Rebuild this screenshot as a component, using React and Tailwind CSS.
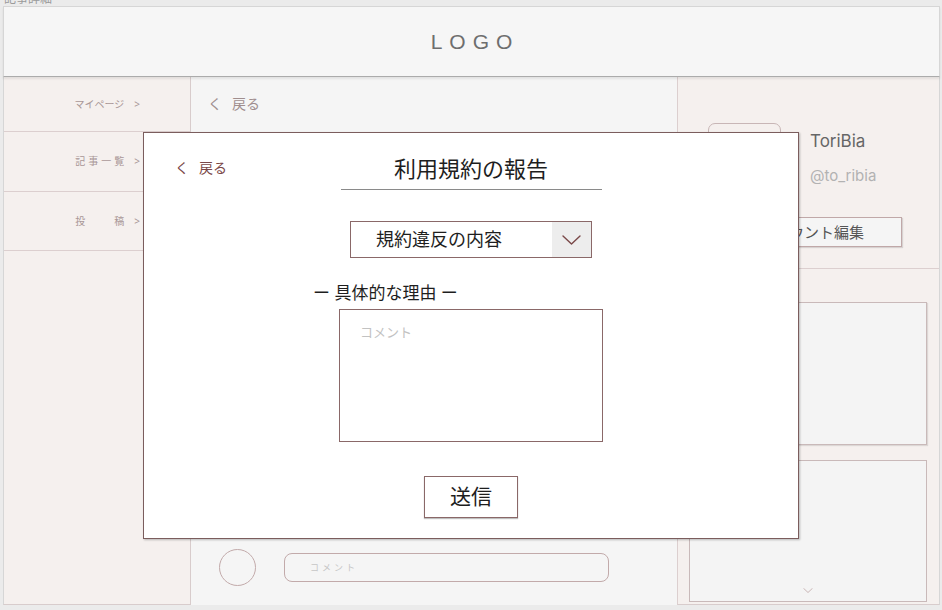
import { useState } from 'react'

const jp = "font-['Noto_Sans','Noto_Sans_CJK_JP',sans-serif]"

function Chevron({ className, w = 19, h = 10 }) {
  return (
    <svg width={w} height={h} viewBox="0 0 19 10" fill="none" className={className}>
      <path d="M1 1 L9.5 9 L18 1" stroke="currentColor" strokeWidth="1.4" strokeLinecap="round" strokeLinejoin="round" />
    </svg>
  )
}

function SideItem({ children, tracked, className }) {
  return (
    <div className={`flex items-center justify-end pr-[50px] border-b border-[#dccfcf] ${className}`}>
      <span className={`text-[10px] text-[#a89696] ${tracked ? 'tracking-[3px]' : ''}`}>{children}</span>
      <span className={`text-[10px] text-[#a89696] ${tracked ? 'ml-[7px]' : 'ml-[10px]'}`}>&gt;</span>
    </div>
  )
}

function ReportModal() {
  const [reason, setReason] = useState('')

  return (
    <div className={`absolute left-[143px] top-[132px] w-[656px] h-[407px] bg-white border border-[#7b5d5d] shadow-[1px_1px_2px_rgba(0,0,0,0.25)] flex flex-col items-center ${jp}`}>
      <div className="absolute left-[31px] top-[25px] flex items-center gap-[10px] text-[14px] leading-[20px] text-[#7a4848]">
        <span>く</span>
        <span>戻る</span>
      </div>

      <div className="mt-[20px] w-[261px] border-b border-[#8a8a8a] pb-[6px] text-center text-[22px] leading-[30px] text-[#1e1e1e]">
        利用規約の報告
      </div>

      <div className="mt-[31px] w-[242px] h-[37px] border border-[#8a6868] flex">
        <div className="flex-1 flex items-center pl-[25px] text-[18px] text-[#1e1e1e]">規約違反の内容</div>
        <div className="w-[39px] bg-[#ededed] flex items-center justify-center text-[#7a4848]">
          <Chevron />
        </div>
      </div>

      <div className="w-[264px] flex flex-col">
        <div className="mt-[23px] -ml-[26px] text-[17px] leading-[23px] text-[#1e1e1e]">ー 具体的な理由 ー</div>
        <textarea
          value={reason}
          onChange={(e) => setReason(e.target.value)}
          placeholder="コメント"
          className="mt-[5px] w-[264px] h-[133px] resize-none border border-[#8a6868] px-[20px] py-[12px] text-[13px] leading-[20px] text-[#333] placeholder:text-[#c2c2c2] focus:outline-none"
        />
      </div>

      <button className="mt-[34px] w-[94px] h-[42px] border border-[#8a6868] bg-white shadow-[0_1px_1px_rgba(0,0,0,0.25)] text-[21px] text-[#1e1e1e]">
        送信
      </button>
    </div>
  )
}

export default function App() {
  return (
    <div className={`relative w-[942px] h-[610px] bg-[#ebebeb] overflow-hidden ${jp}`}>
      <div className="absolute left-[4px] -top-[10px] text-[12px] text-[#9a9a9a]">記事詳細</div>

      <div className="ml-[3px] mt-[6px] w-[937px] flex flex-col">
        <header className="relative z-10 h-[71px] bg-[#f6f6f6] border border-[#d6d6d6] border-b-[#ababab] shadow-[0_2px_2px_rgba(0,0,0,0.08)] flex items-center justify-center">
          <span className="pl-[7px] text-[21px] tracking-[7px] text-[#6e6e6e] font-['Liberation_Sans',sans-serif]">LOGO</span>
        </header>

        <div className="h-[528px] flex">
          <aside className="w-[188px] bg-[#f5f0ee] border-l border-[#d6d6d6] border-r border-r-[#d8cccc] border-b border-b-[#d8cccc] flex flex-col">
            <SideItem className="h-[55px]">マイページ</SideItem>
            <SideItem className="h-[60px]" tracked>記事一覧</SideItem>
            <SideItem className="h-[59px]" tracked>投{'\u3000\u3000'}稿</SideItem>
          </aside>

          <main className="w-[486px] bg-[#f5f5f5] flex flex-col justify-between">
            <div className="pl-[17px] pt-[17px] flex items-center gap-[10px] text-[14px] leading-[20px] text-[#a08e8e]">
              <span>く</span>
              <span>戻る</span>
            </div>
            <div className="pl-[28px] pb-[19px] flex items-center gap-[28px]">
              <div className="w-[37px] h-[37px] rounded-full border border-[#c2aaaa]" />
              <div className="w-[325px] h-[29px] rounded-[8px] border border-[#c2aaaa] flex items-center pl-[25px] text-[9px] tracking-[3px] text-[#c6c6c6]">
                コメント
              </div>
            </div>
          </main>

          <section className="flex-1 bg-[#f5f0ee] border-l border-[#dccfcf] border-r border-r-[#d6d6d6] border-b border-b-[#d8cccc] flex flex-col">
            <div className="h-[192px] ml-[12px] border-b border-[#dccfcf] flex flex-col">
              <div className="pt-[46px] pl-[18px] flex items-start gap-[29px]">
                <div className="w-[73px] h-[73px] rounded-[7px] border border-[#c8b6b6]" />
                <div className="pt-[6px] flex flex-col">
                  <span className="text-[17px] leading-[24px] text-[#666] font-['Inter',sans-serif]">ToriBia</span>
                  <span className="mt-[12px] text-[15px] leading-[22px] text-[#b2b2b2] font-['Inter',sans-serif]">@to_ribia</span>
                </div>
              </div>
              <div className="mt-[21px] self-end mr-[37px] w-[181px] h-[30px] bg-[#f5f5f5] border border-[#c0a8a8] shadow-[1px_1px_1px_rgba(0,0,0,0.12)] flex items-center justify-center text-[15px] text-[#555]">
                アカウント編集
              </div>
            </div>

            <div className="mt-[33px] ml-[11px] mr-[12px] h-[143px] bg-[#f4f4f4] border border-[#c9b9b9] shadow-[1px_1px_1px_rgba(0,0,0,0.1)]" />
            <div className="mt-[15px] ml-[11px] mr-[12px] h-[142px] bg-[#f4f4f4] border border-[#c9b9b9] flex flex-col items-center justify-end pb-[8px] text-[#b89c9c]">
              <Chevron w={10} h={5} />
            </div>
          </section>
        </div>
      </div>

      <ReportModal />
    </div>
  )
}
